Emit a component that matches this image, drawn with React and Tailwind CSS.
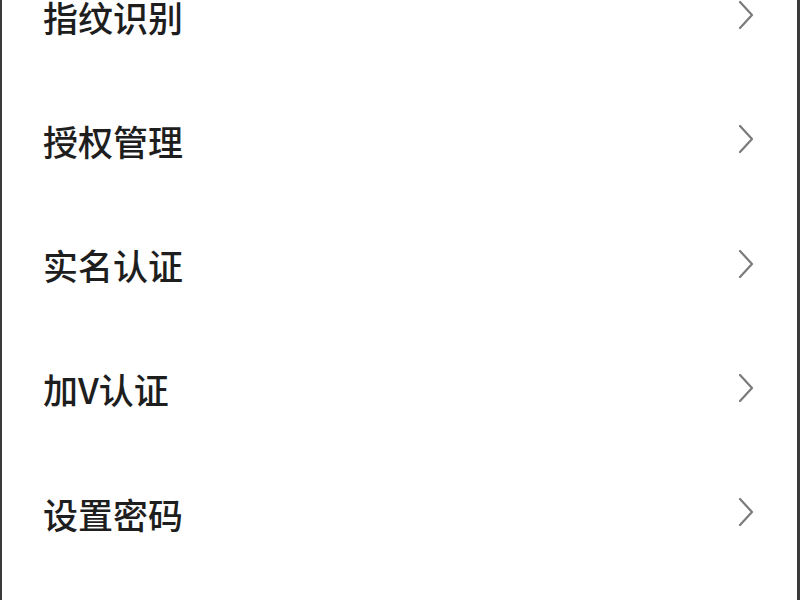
import React from "react";

const items = ["指纹识别", "授权管理", "实名认证", "加V认证", "设置密码"];

function Chevron() {
  return (
    <svg width="18" height="30" viewBox="0 0 18 30" fill="none">
      <polyline
        points="3,2 15,15 3,28"
        stroke="#7a7a7a"
        strokeWidth="2.2"
        strokeLinecap="round"
        strokeLinejoin="round"
      />
    </svg>
  );
}

export default function App() {
  return (
    <div className="w-[800px] h-[600px] overflow-hidden bg-white border-l-2 border-r-[3px] border-[#3a3a3a]">
      <div className="-mt-[46px] flex flex-col">
        {items.map((label) => (
          <div
            key={label}
            className="h-[124.25px] shrink-0 flex items-center justify-between pl-[41px] pr-[42px]"
          >
            <span
              className="text-[35px] leading-none font-medium text-[#1e1e1e]"
              style={{ fontFamily: '"Noto Sans CJK SC", "Noto Sans", sans-serif' }}
            >
              {label}
            </span>
            <div className="-mt-[2px]">
              <Chevron />
            </div>
          </div>
        ))}
      </div>
    </div>
  );
}
